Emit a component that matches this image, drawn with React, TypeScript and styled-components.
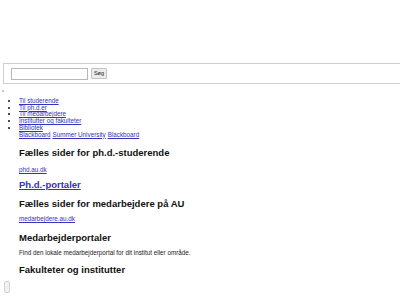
import styled, { createGlobalStyle } from 'styled-components';

const GlobalStyle = createGlobalStyle`
  html, body {
    margin: 0;
    padding: 0;
    background: #fff;
    overflow: hidden;
  }
  body {
    font-family: 'Liberation Sans', Arial, sans-serif;
    color: #111;
  }
`;

const Page = styled.div`
  display: flex;
  flex-direction: column;
  width: 400px;
  height: 300px;
  padding-top: 63px;
  box-sizing: border-box;
`;

const SearchBar = styled.form`
  display: flex;
  align-items: center;
  gap: 3px;
  height: 21px;
  margin: 0 0 0 3px;
  padding: 0 0 0 7px;
  border: 1px solid #cfcfcf;
  border-right: none;
  box-sizing: border-box;
`;

const SearchInput = styled.input`
  width: 77px;
  height: 12px;
  padding: 0;
  border: 1px solid #b8b8b8;
  box-sizing: border-box;
  background: #fff;
`;

const SearchButton = styled.button`
  width: 16px;
  height: 11px;
  padding: 0;
  border: 1px solid #c4c4c4;
  border-radius: 1px;
  background: #ececec;
  font-family: 'Liberation Sans', Arial, sans-serif;
  font-size: 5.5px;
  line-height: 9px;
  color: #222;
`;

const Dot = styled.span`
  width: 2px;
  height: 2px;
  margin: 6px 0 0 2px;
  background: #c8c8c8;
`;

const Nav = styled.ul`
  margin: 6px 0 0;
  padding: 0 0 0 19px;
  font-size: 6.3px;
  line-height: 6.7px;
  list-style: disc;
`;

const NavItem = styled.li`
  padding: 0;
`;

const Link = styled.a<{ $bold?: boolean }>`
  color: #3333bb;
  text-decoration: underline;
  font-weight: ${(p) => (p.$bold ? 700 : 400)};
`;

const SubLinks = styled.div`
  display: flex;
  gap: 2px;
`;

const Content = styled.div`
  display: flex;
  flex-direction: column;
  padding-left: 19px;
`;

const Heading = styled.h2<{ $gap: number }>`
  margin: ${(p) => p.$gap}px 0 0;
  font-size: 9.5px;
  line-height: 11px;
  font-weight: 700;
  color: #111;
`;

const Small = styled.p<{ $gap: number }>`
  margin: ${(p) => p.$gap}px 0 0;
  font-size: 6.3px;
  line-height: 7px;
  color: #222;
`;

const Handle = styled.span`
  width: 6px;
  height: 12px;
  margin: 6px 0 0 4px;
  border: 1px solid #d4d4d4;
  border-radius: 2px;
  background: #f0f0f0;
  box-sizing: border-box;
`;

export default function App() {
  return (
    <>
      <GlobalStyle />
      <Page>
        <SearchBar onSubmit={(e) => e.preventDefault()}>
          <SearchInput type="text" />
          <SearchButton type="submit">Søg</SearchButton>
        </SearchBar>
        <Dot />
        <Nav>
          <NavItem><Link href="#">Til studerende</Link></NavItem>
          <NavItem><Link href="#">Til ph.d.er</Link></NavItem>
          <NavItem><Link href="#">Til medarbejdere</Link></NavItem>
          <NavItem><Link href="#">Institutter og fakulteter </Link></NavItem>
          <NavItem>
            <Link href="#">Bibliotek</Link>
            <SubLinks>
              <Link href="#">Blackboard</Link>
              <Link href="#">Summer University</Link>
              <Link href="#">Blackboard</Link>
            </SubLinks>
          </NavItem>
        </Nav>
        <Content>
          <Heading $gap={9}>Fælles sider for ph.d.-studerende</Heading>
          <Small $gap={8}><Link href="#">phd.au.dk</Link></Small>
          <Heading $gap={6}><Link href="#" $bold>Ph.d.-portaler</Link></Heading>
          <Heading $gap={7.4}>Fælles sider for medarbejdere på AU</Heading>
          <Small $gap={6.6}><Link href="#">medarbejdere.au.dk</Link></Small>
          <Heading $gap={9.4}>Medarbejderportaler</Heading>
          <Small $gap={6.6}>Find den lokale medarbejderportal for dit institut eller område.</Small>
          <Heading $gap={8}>Fakulteter og institutter</Heading>
        </Content>
        <Handle />
      </Page>
    </>
  );
}
